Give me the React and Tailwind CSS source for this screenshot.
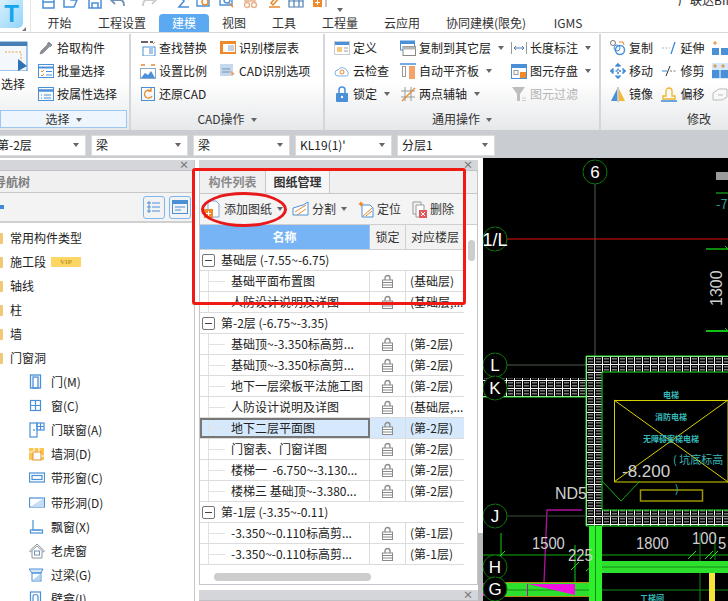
import React from "react";

const tabs = [
  ["开始", "w-[51px]"],
  ["工程设置", "w-[74px]"],
  ["建模", "w-[50px]"],
  ["视图", "w-[50px]"],
  ["工具", "w-[50px]"],
  ["工程量", "w-[62px]"],
  ["云应用", "w-[62px]"],
  ["协同建模(限免)", "w-[106px]"],
  ["IGMS", "w-[58px]"],
];

const Svg = ({ children, w = 16, h = 16, className = "" }) => (
  <svg width={w} height={h} viewBox={`0 0 ${w} ${h}`} fill="none" className={`shrink-0 ${className}`}>
    {children}
  </svg>
);

const Caret = ({ className = "" }) => (
  <span className={`inline-block w-0 h-0 border-x-[3.5px] border-t-[4px] border-x-transparent border-t-[#666] ${className}`}></span>
);

// quick access bar, cut off by the top of the window
const quick = [
  ["w-[22px]", <path d="M2 1v14h11V1M2 9h11" stroke="#4a90d9" strokeWidth="1.5" />],
  ["w-[24px]", <path d="M1 14V5h5l2 2h6l-3 7zM1 14" stroke="#4a90d9" strokeWidth="1.5" />],
  ["w-[23px]", <path d="M2 1h12v14H2zM5 1v5h6V1M5 15v-5h6v5" stroke="#4a90d9" strokeWidth="1.5" />],
  ["w-[31px]", <path d="M5 3L1 7l4 4M1 7h9c3 0 4 2 4 6" stroke="#6f93b8" strokeWidth="1.8" />],
  ["w-[35px]", <path d="M11 3l4 4-4 4M15 7H6c-3 0-4 2-4 6" stroke="#ccc" strokeWidth="1.8" />],
  ["w-[20px]", <path d="M13 2H3l5 6-5 6h10" stroke="#4a90d9" strokeWidth="1.6" />],
  ["w-[23px]", <g stroke="#4a90d9" strokeWidth="1.4"><path d="M1 1h12v12H1z" /><circle cx="9" cy="9" r="3" stroke="#e58a2e" /></g>],
  ["w-[24px]", <g stroke="#4a90d9" strokeWidth="1.4"><path d="M1 2h12v10H1z" /><circle cx="8" cy="7" r="3" /><path d="M10 10l4 4" stroke="#e58a2e" /></g>],
  ["w-[24px]", <g stroke="#e9b08c" strokeWidth="1.4"><path d="M2 2h10v6H2z" /><circle cx="4" cy="12" r="2.5" /><circle cx="11" cy="12" r="2.5" /></g>],
  ["w-[21px]", <path d="M2 14h11M4 10l7-8 2 2-7 8z" stroke="#e58a2e" strokeWidth="1.5" />],
  ["w-[24px]", <path d="M1 3h14v11H1zM1 8h14M6 3v11M11 3v11" stroke="#4a7fb5" strokeWidth="1.2" />],
  ["w-[25px]", <g><path d="M3 2h11v12" stroke="#888" /><rect x="1" y="5" width="9" height="9" fill="#ef8a2c" /><path d="M3 9.500h5M5.500 7v5" stroke="#fff" /></g>],
];

const icons = {
  dropper: <path d="M2 14l1-3 6-6 2 2-6 6zM9 4l2-2 3 3-2 2z" fill="#8b8f96" stroke="#6d7178" strokeWidth=".6" />,
  batch: <g stroke="#4a90d9"><rect x=".5" y="1.500" width="15" height="13" /><path d="M.5 4.500h15" strokeWidth="2" /><path d="M3 8l1 1 2-2M3 12l1 1 2-2" stroke="#e58a2e" /><path d="M8 8.500h6M8 12h6" /></g>,
  attr: <g stroke="#4a90d9"><rect x=".5" y="1.500" width="15" height="13" /><path d="M.5 4.500h15" strokeWidth="2.500" /><path d="M3 9h1M3 12h1M6 9h7M6 12h7" /></g>,
  find: <g><path d="M1 2h7M10 2h3" stroke="#666" strokeWidth="2" /><path d="M13 4l2-2" stroke="#e58a2e" /><rect x="3" y="7" width="12" height="9" stroke="#4a90d9" /><path d="M9 9h4M9 11h4M9 13h4" stroke="#4a90d9" /></g>,
  scale: <g><path d="M1 2h4M11 2h4" stroke="#e58a2e" strokeWidth="1.500" /><rect x=".5" y="5.500" width="15" height="10" stroke="#8aa8c8" /><path d="M1 15l4-5 3 2 3-4 4 7z" fill="#4a90d9" /></g>,
  restore: <g><rect x="1.500" y="1.500" width="13" height="13" stroke="#4a90d9" /><path d="M11 5a4 4 0 1 0 1 5M11 2v3H8" stroke="#e58a2e" strokeWidth="1.300" /></g>,
  floors: <g><rect x="0" y="1" width="16" height="13" fill="#ef8a2c" /><rect x="3" y="4" width="12" height="8" fill="#fff" /><path d="M8 6h6M8 8h6M8 10h6" stroke="#8aa8c8" /></g>,
  cadopt: <g><rect x="0" y="1" width="13" height="12" fill="#c6d8ec" /><path d="M10 7l5 4-3 1 1 3z" fill="#f0a060" /><path d="M2 6h8M2 9h8" stroke="#6f93b8" /></g>,
  define: <g><rect x=".5" y="1.500" width="15" height="13" stroke="#c8ccd2" fill="#fff" /><rect x="1" y="2" width="14" height="3" fill="#4a90d9" /><rect x="3" y="7" width="5" height="5" fill="#f5c780" /><path d="M10 8h4M10 11h4" stroke="#999" /></g>,
  cloud: <g><path d="M4 13a3 3 0 0 1 0-6 5 5 0 0 1 9 1 3 3 0 0 1 0 5z" stroke="#7eb4e8" /><circle cx="8" cy="9" r="2" stroke="#e58a2e" /></g>,
  lock: <g><rect x="2" y="7" width="12" height="9" rx="1" fill="#4a90d9" /><path d="M5 7V4a3 3 0 0 1 6 0v3" stroke="#4a90d9" strokeWidth="1.500" /><circle cx="8" cy="11" r="1.200" fill="#fff" /></g>,
  copyTo: <g><rect x=".5" y="1" width="14" height="9" fill="#fff" stroke="#4a90d9" /><rect x="1" y="1" width="13" height="3" fill="#4a90d9" /><rect x="3" y="6.500" width="12.500" height="9" fill="#fff" stroke="#888" /><rect x="3" y="6.500" width="12.500" height="3" fill="#b5b5b5" /></g>,
  align: <g><path d="M0 1h16" stroke="#4a90d9" strokeWidth="1.500" /><rect x="2.500" y="3.500" width="3" height="10" stroke="#999" /><rect x="9" y="3" width="6" height="13" fill="#f5a36a" /></g>,
  axis: <g stroke="#999"><path d="M1 5h14M1 11h14M5 1v14M11 1v14" /><path d="M2 15L15 2" stroke="#e58a2e" strokeWidth="1.200" /></g>,
  dim: <g stroke="#4a7fb5"><path d="M.5 2v12M15.500 2v12" stroke="#999" /><path d="M3 8h10M3 8l2-2M3 8l2 2M13 8l-2-2M13 8l-2 2" /></g>,
  save: <g><rect x=".5" y="1.500" width="15" height="14" stroke="#4a90d9" fill="#fff" /><rect x="1" y="2" width="14" height="3" fill="#4a90d9" /><rect x="3" y="7.500" width="4" height="4" stroke="#999" /><rect x="9" y="9" width="6" height="6" fill="#ef8a2c" /></g>,
  filter: <g><path d="M1 1h13L9 8v7H6V8z" fill="#bdbdbd" /><path d="M11 12h4M11 14.500h4" stroke="#ccc" /></g>,
  copy: <g><circle cx="3" cy="3" r="2.500" stroke="#777" /><path d="M9 2h4l1 3" stroke="#e58a2e" /><circle cx="10" cy="10" r="4.500" stroke="#4a90d9" strokeWidth="1.500" /><circle cx="7" cy="8" r="3" stroke="#4a90d9" /></g>,
  move: <g stroke="#3e88d6" strokeWidth="1.600"><path d="M8 2v12M2 8h12" strokeDasharray="2 1.500" /><path d="M5.500 3.500L8 1l2.500 2.500M5.500 12.500L8 15l2.500-2.500M3.500 5.500L1 8l2.500 2.500M12.500 5.500L15 8l-2.500 2.500" /></g>,
  mirror: <g><path d="M1 15L7 3v12z" fill="#4a90d9" /><path d="M9 3v12h6z" fill="#f5b82e" /><path d="M8 1v15" stroke="#999" /></g>,
  extend: <g><path d="M1 8h8" stroke="#9fb7d0" strokeDasharray="2 1.500" /><path d="M10 14l4-12" stroke="#3e88d6" strokeWidth="1.300" /></g>,
  trim: <g><path d="M1 8h5" stroke="#3e88d6" /><path d="M9 8h6" stroke="#777" strokeDasharray="2 1.500" /><path d="M5 13l4-10" stroke="#333" /></g>,
  offset: <g><path d="M2 13V10h3V5a3 3 0 0 1 6 0v5h3v3z" stroke="#f0b429" strokeWidth="1.300" /><path d="M0 15h16" stroke="#3e88d6" strokeWidth="1.500" /></g>,
  merge: <g><path d="M3 1v4M1 3h4" stroke="#e58a2e" /><rect x="0" y="8" width="7" height="7" fill="#4a90d9" /><rect x="9" y="8" width="7" height="7" fill="#4a90d9" /></g>,
  split: <g><path d="M3 1v4M1 3h4M11 1v4M9 3h4" stroke="#e58a2e" /><rect x="0" y="7" width="16" height="8" fill="#4a90d9" /><path d="M8 7v8" stroke="#fff" /></g>,
  stretch: <path d="M1 14V7l6-4h8v8l-5 3zM6 9h5" stroke="#bbb" />,
};

const Tool = ({ icon, text, caret, disabled, iconClass = "" }) => (
  <div className="h-[23px] flex items-center whitespace-nowrap">
    <Svg className={iconClass}>{icons[icon]}</Svg>
    <span className={`ml-[3px] ${disabled ? "text-[#b5b5b5]" : "text-[#222]"}`}>{text}</span>
    {caret && <Caret className="ml-[7px]" />}
  </div>
);

const Column = ({ className = "", items }) => (
  <div className={`flex flex-col ${className}`}>
    {items.map((it) => (
      <Tool key={it.text} {...it} />
    ))}
  </div>
);

const Group = ({ title, className, children, footerClass = "", titleCaret = true }) => (
  <div className={`flex flex-col h-full border-r-2 border-[#d3d6da] ${className}`}>
    <div className="flex h-[76px] pt-[2px]">{children}</div>
    <div className={`h-[18px] flex items-center justify-center text-[#333] ${footerClass}`}>
      <span>{title}</span>
      {titleCaret && <Caret className="ml-[6px] mt-[1px]" />}
    </div>
  </div>
);

const Combo = ({ text, className, noCaret }) => (
  <div className={`h-[21px] bg-white border border-[#dcdcdc] flex items-center justify-between pl-[4px] pr-[6px] ${className}`}>
    <span className="text-[#222] whitespace-nowrap">{text}</span>
    {!noCaret && <Caret />}
  </div>
);

const PanelStrip = ({ className = "" }) => (
  <div className={`h-[11px] bg-[#d4d6da] border-b border-[#bfc1c5] flex items-center justify-end pr-[5px] text-[10px] leading-none text-[#777] font-bold ${className}`}>×</div>
);

const treeTop = [
  ["常用构件类型"],
  ["施工段", true],
  ["轴线"],
  ["柱"],
  ["墙"],
  ["门窗洞"],
];

const Folder = () => <div className="w-[3px] h-[11px] bg-[#f3c875] rounded-r-[1px] mr-[7px]"></div>;

const subIcons = {
  door: <g stroke="#4a90d9" strokeWidth="1.300"><rect x="1.500" y="1" width="10" height="13" /><rect x="4" y="3" width="5" height="11" /></g>,
  win: <g stroke="#4a90d9" strokeWidth="1.200"><rect x="1.500" y="2.500" width="10" height="10" /><path d="M6.500 2.500v10M1.500 7.500h10" /></g>,
  doorwin: <g stroke="#4a90d9" strokeWidth="1.200"><rect x="1" y="1" width="7" height="14" /><rect x="8" y="1" width="7" height="7" /><path d="M11.500 1v7M8 4.500h7M5 7v2" /></g>,
  hole: <g><rect x="0" y="2" width="15" height="12" fill="#f9c74f" /><rect x="4" y="6" width="8" height="8" fill="#fff" stroke="#e58a2e" /><path d="M0 6h4M5 2v4M10 2v4M12 10h3" stroke="#fff" /></g>,
  band: <g stroke="#4a90d9" strokeWidth="1.200"><rect x=".5" y="3" width="15" height="9" /><rect x="3" y="5.500" width="10" height="4" /></g>,
  bandhole: <g><rect x=".5" y="3" width="15" height="9" stroke="#4a90d9" strokeWidth="1.200" /><path d="M1 12L15 3v9z" fill="#c6dcf3" /></g>,
  bay: <g stroke="#4a90d9" strokeWidth="1.200"><path d="M4 1v10h8" /><rect x="1.500" y="11" width="12" height="3" /></g>,
  dormer: <g stroke="#8e9399"><path d="M8 1L0.500 8l1 1L8 3l6.500 6 1-1zM3 8v7h10V8" /><rect x="5.500" y="8" width="5" height="4" stroke="#6f93b8" /></g>,
  lintel: <g><path d="M0 2h14l-2 4H3z" fill="#d8e5f3" stroke="#4a90d9" /><rect x="3" y="6" width="9" height="8" stroke="#4a90d9" /><path d="M4 13l7-6v6z" fill="#b9d3ee" /></g>,
  niche: <g stroke="#4a90d9" strokeWidth="1.200"><rect x="1.500" y="1" width="10" height="14" /><path d="M4 15V6a2.500 2.500 0 0 1 5 0v9" /></g>,
};

const treeSub = [
  ["door", "门(M)"],
  ["win", "窗(C)"],
  ["doorwin", "门联窗(A)"],
  ["hole", "墙洞(D)"],
  ["band", "带形窗(C)"],
  ["bandhole", "带形洞(D)"],
  ["bay", "飘窗(X)"],
  ["dormer", "老虎窗"],
  ["lintel", "过梁(G)"],
  ["niche", "壁龛(I)"],
];

const LeftPanel = () => (
  <div className="w-[195px] shrink-0 h-full flex flex-col bg-white border-r border-[#c4c6ca]">
    <PanelStrip />
    <div className="h-[22px] bg-[#f0f0f0] border-b border-[#c8c8c8] flex items-center text-[#7d7d7d] font-bold -ml-[30px]">
      模块导航树
    </div>
    <div className="h-[30px] bg-[#f3f3f3] border-b-2 border-[#d0d0d0] flex items-center justify-between pr-[3px]">
      <div className="w-[4px] h-[4px] bg-[#3e88d6]"></div>
      <div className="flex gap-[4px]">
        <div className="w-[22px] h-[23px] border border-[#7fb6ef] rounded-[3px] flex items-center justify-center">
          <Svg w={14} h={14}><path d="M1 2h2v2H1zM1 6h2v2H1zM1 10h2v2H1zM5 3h8M5 7h8M5 11h8" stroke="#4a90d9" /></Svg>
        </div>
        <div className="w-[22px] h-[23px] border border-[#7fb6ef] rounded-[3px] flex items-center justify-center">
          <Svg w={16} h={14}><rect x=".5" y=".5" width="15" height="13" stroke="#4a90d9" /><rect x="1" y="1" width="14" height="3" fill="#4a90d9" /><path d="M3 7h10M3 10h6" stroke="#4a90d9" /></Svg>
        </div>
      </div>
    </div>
    <div className="flex-1 overflow-hidden pt-[3px]">
      {treeTop.map(([t, vip]) => (
        <div key={t} className="h-[24px] flex items-center">
          <Folder />
          <span className="text-[#222]">{t}</span>
          {vip && (
            <span className="ml-[5px] w-[30px] h-[10px] bg-[#fdd663] text-[#c09a2a] text-[7px] leading-[10px] font-bold text-center font-['Liberation_Serif',serif]">VIP</span>
          )}
        </div>
      ))}
      {treeSub.map(([ic, t]) => (
        <div key={t} className="h-[24.1px] flex items-center pl-[29px]">
          <Svg>{subIcons[ic]}</Svg>
          <span className="ml-[6px] text-[#222]">{t}</span>
        </div>
      ))}
    </div>
  </div>
);

const Lock = () => (
  <Svg w={11} h={14}>
    <path d="M3 6V4a2.500 2.500 0 0 1 5 0v2" stroke="#8a8a8a" strokeWidth="1.300" />
    <rect x=".5" y="6" width="10" height="7.500" fill="#fff" stroke="#8a8a8a" />
    <path d="M1 8.500h9M1 11h9" stroke="#8a8a8a" />
  </Svg>
);

const rows = [
  { group: "基础层 (-7.55~-6.75)" },
  { name: "基础平面布置图", floor: "(基础层)" },
  { name: "人防设计说明及详图", floor: "(基础层,..." },
  { group: "第-2层 (-6.75~-3.35)" },
  { name: "基础顶~-3.350标高剪...", floor: "(第-2层)" },
  { name: "基础顶~-3.350标高剪...", floor: "(第-2层)" },
  { name: "地下一层梁板平法施工图", floor: "(第-2层)" },
  { name: "人防设计说明及详图", floor: "(基础层,..." },
  { name: "地下二层平面图", floor: "(第-2层)", selected: true },
  { name: "门窗表、门窗详图", floor: "(第-2层)" },
  { name: "楼梯一  -6.750~-3.130...", floor: "(第-2层)" },
  { name: "楼梯三 基础顶~-3.380...", floor: "(第-2层)" },
  { group: "第-1层 (-3.35~-0.11)" },
  { name: "-3.350~-0.110标高剪...", floor: "(第-1层)" },
  { name: "-3.350~-0.110标高剪...", floor: "(第-1层)" },
];

const Row = ({ row }) => {
  if (row.group) {
    return (
      <div className="h-[21px] flex items-center border-b border-[#dcdcdc] pl-[2px]">
        <div className="w-[13px] h-[13px] border border-[#777] rounded-[2px] flex items-center justify-center">
          <div className="w-[7px] h-px bg-[#444]"></div>
        </div>
        <span className="ml-[6px] text-[#222] whitespace-nowrap">{row.group}</span>
      </div>
    );
  }
  const sel = row.selected;
  return (
    <div className={`h-[21px] flex border-b border-[#dcdcdc] ${sel ? "bg-[#d5e8fc]" : ""}`}>
      <div className={`w-[170px] flex items-center border-r border-[#dcdcdc] ${sel ? "outline-2 -outline-offset-2 outline-[#777]" : ""}`}>
        <div className="ml-[8px] w-[17px] self-stretch border-l border-[#e2e2e2] flex items-center">
          <div className="h-px w-full bg-[#e2e2e2]"></div>
        </div>
        <span className="ml-[6px] text-[#222] whitespace-pre">{row.name}</span>
      </div>
      <div className="w-[36px] flex items-center justify-center border-r border-[#dcdcdc]">
        <Lock />
      </div>
      <div className="flex-1 flex items-center pl-[4px] text-[#222] whitespace-nowrap">{row.floor}</div>
    </div>
  );
};

const DrawingPanel = () => (
  <div className="w-[279px] shrink-0 ml-[4px] h-full flex flex-col">
    <PanelStrip />
    <div className="h-[420px] bg-white border-x border-b border-[#c4c6ca] flex flex-col overflow-hidden relative">
      <div className="h-[23px] bg-[#f0f0f0] border-b border-[#c8c8c8] flex">
        <div className="w-[65px] flex items-center justify-center text-[#8a8a8a] font-bold">构件列表</div>
        <div className="w-[65px] flex items-center justify-center bg-[#f7f7f7] border-x border-[#c8c8c8] text-[#333] font-bold">图纸管理</div>
      </div>
      <div className="h-[31px] bg-[#f4f4f4] border-b border-[#cfcfcf] flex items-center pl-[4px]">
        <Svg w={17} h={18}><path d="M4 1h8l3 3v13H4z" stroke="#7aa7d6" fill="#fff" /><rect x="0" y="9" width="9" height="9" fill="#ef8a2c" /><path d="M2 13.500h5M4.500 11v5" stroke="#fff" /></Svg>
        <span className="ml-[3px] text-[#333]">添加图纸</span>
        <Caret className="ml-[5px]" />
        <Svg w={17} h={16} className="ml-[9px]"><path d="M1 14V7l10-3 5-3v13z" fill="#fff" stroke="#4a90d9" /><path d="M3 11l11-7M5 14l9-6" stroke="#e58a2e" /></Svg>
        <span className="ml-[3px] text-[#333]">分割</span>
        <Caret className="ml-[5px]" />
        <Svg w={16} h={18} className="ml-[11px]"><path d="M4 5h8l3 3v9H4z" stroke="#4a90d9" fill="#fff" /><path d="M5 16l9-8M8 16l6-5" stroke="#e58a2e" /><path d="M3 1l1 2 2 1-2 1-1 2-1-2-2-1 2-1z" fill="#ef8a2c" /></Svg>
        <span className="ml-[3px] text-[#333]">定位</span>
        <Svg w={15} h={17} className="ml-[11px]"><path d="M1 1h8v12H1z" stroke="#999" /><path d="M4 4h8v12H4z" fill="#fff" stroke="#999" /><rect x="7" y="9" width="8" height="8" fill="#e2575b" /><path d="M9 11l4 4M13 11l-4 4" stroke="#fff" /></Svg>
        <span className="ml-[3px] text-[#333]">删除</span>
      </div>
      <div className="w-[264px] flex-1 overflow-hidden">
        <div className="h-[25px] flex border-b border-[#d0d0d0] bg-[#f2f2f2]">
          <div className="w-[170px] bg-[#77b4f5] border-r border-[#9cc7f2] flex items-center justify-center text-white font-bold">名称</div>
          <div className="w-[36px] border-r border-[#d0d0d0] flex items-center justify-center text-[#333]">锁定</div>
          <div className="flex-1 flex items-center justify-center text-[#333] whitespace-nowrap">对应楼层</div>
        </div>
        {rows.map((r, i) => (
          <Row key={i} row={r} />
        ))}
      </div>
      <div className="h-[13px] pl-[14px] pt-[2px] shrink-0">
        <div className="w-[157px] h-[8px] rounded-full bg-[#cdcdcd]"></div>
      </div>
      {/* vertical scroll thumb */}
      <div className="absolute left-[268px] top-[69px] w-[7px] h-[21px] rounded-full bg-[#cdcdcd]"></div>
    </div>
    <div className="mt-[5px] h-[11px] bg-[#d4d6da] border-b border-[#bfc1c5] flex items-center justify-end pr-[5px] text-[10px] leading-none text-[#777] font-bold">×</div>
    <div className="flex-1 flex border-x border-[#c4c6ca] bg-white">
      <div className="w-[65px] bg-[#f0f0f0] border-r border-[#c8c8c8]"></div>
      <div className="w-[65px] bg-[#f7f7f7] border-r border-[#c8c8c8]"></div>
    </div>
  </div>
);

const Bubble = ({ x, y, label, size = 17 }) => (
  <g>
    <circle cx={x} cy={y} r="12" stroke="#0b7a0b" strokeWidth="1" strokeDasharray="9 0.500" />
    <text x={x} y={y + size * 0.37} textAnchor="middle" fill="#fff" fontSize={size} fontFamily="Liberation Sans, sans-serif">{label}</text>
  </g>
);

const Dim = ({ x, y, t, size = 17 }) => (
  <text x={x} y={y} fill="#d0d0d0" fontSize={size} fontFamily="Liberation Sans, sans-serif" textLength={t.length * 8.200} lengthAdjust="spacingAndGlyphs">{t}</text>
);

// CAD drawing on the right, in window coordinates
const CadCanvas = () => (
  <svg width="245" height="443" viewBox="483 158 245 443" className="block bg-black">
    <defs>
      <pattern id="hatch" x="586" y="356" width="8" height="8" patternUnits="userSpaceOnUse">
        <rect width="8" height="8" fill="#050505" />
        <rect x="2" y="2" width="5" height="1.500" fill="#777" />
        <rect x="2" y="5" width="5" height="1.500" fill="#777" />
        <path d="M0 .5h8M.5 0v8" stroke="#f4f4f4" strokeWidth="1" />
      </pattern>
    </defs>

    <path d="M595 184V356" stroke="#4d5c4d" />
    <path d="M507 239H728" stroke="#e01010" />
    <path d="M507 365H586" stroke="#4d5c4d" />
    <Bubble x={595} y={172} label="6" />
    <Bubble x={495} y={239} label="1/L" size={18} />
    <Bubble x={495} y={365} label="L" />

    <rect x="716" y="172" width="12" height="8" fill="#ddd" opacity=".7" />
    <path d="M716 193H728" stroke="#1fd01f" />
    <text x="716" y="209" fill="#2f9a9a" fontSize="13">-7</text>
    <path d="M706 249H728" stroke="#0b8a0b" strokeWidth="2" />
    <path d="M706 331H728" stroke="#10c010" strokeWidth="2" />
    <path d="M725 246l3 3M725 328l3 3" stroke="#10c010" />
    <text transform="translate(722 306) rotate(-90)" fill="#d0d0d0" fontSize="16" fontFamily="Liberation Sans, sans-serif">1300</text>

    {/* walls */}
    <path d="M586 356H728V372H602V510H728V526H586V397H483V378H586Z" fill="url(#hatch)" />
    <path d="M728 356H586V526H728M602 372H728M602 372V510H728" stroke="#1fe01f" strokeWidth="1" fill="none" />
    <path d="M483 397H586" stroke="#1fe01f" />
    <Bubble x={495} y={388} label="K" />
    <Bubble x={495} y={516} label="J" />

    {/* lift */}
    <path d="M614.500 400.500H728V482H614.500Z M614 400L728 482 M614 482L728 400" stroke="#d8d000" strokeWidth="1" fill="none" />
    <path d="M602 481L621 501L640 481" stroke="#0faa0f" fill="none" />
    <rect x="640.500" y="490" width="62" height="11" stroke="#9c9600" strokeWidth="1.500" />
    <g fill="#35b8b8" fontFamily="Noto Sans CJK SC, sans-serif" fontWeight="700">
      <text x="671" y="398" fontSize="8" textAnchor="middle">电梯</text>
      <text x="671" y="420" fontSize="8" textAnchor="middle">消防电梯</text>
      <text x="671" y="442" fontSize="8" textAnchor="middle">无障碍客梯电梯</text>
      <text x="673" y="464" fontSize="11" fontWeight="400">( 坑底标高</text>
      <text x="675" y="493" fontSize="11" fontWeight="400">)</text>
    </g>
    <text x="622" y="477" fill="#d0d0d0" fontSize="17" fontFamily="Liberation Sans, sans-serif">-8.200</text>
    <text x="555" y="499" fill="#d0d0d0" fontSize="16" fontFamily="Liberation Sans, sans-serif">ND5</text>

    <path d="M582 510H547L544 583" stroke="#b010a0" strokeWidth="1.300" fill="none" />

    {/* grid lines */}
    <path d="M507 516H586M602 516H728" stroke="#3d4f3d" />
    <path d="M483 555H728" stroke="#0fae0f" />
    <path d="M501 533V560" stroke="#0b8a0b" strokeWidth="1.500" />
    <path d="M575 545V590" stroke="#0b8a0b" strokeWidth="1.500" />
    <path d="M700 533V601M715 533V560" stroke="#0b8a0b" strokeWidth="1" />

    {/* beams */}
    <rect x="602" y="561" width="126" height="12" fill="#2ee02e" />
    <path d="M602 567H728" stroke="#148a14" />
    <rect x="500" y="583" width="89" height="13" fill="#2ee02e" />
    <path d="M500 582.500H589M500 596.500H589" stroke="#b98a1a" />
    <path d="M500 590H728" stroke="#148a14" />
    <rect x="589" y="526" width="13" height="75" fill="#2cf02c" />
    <path d="M595.500 526V601" stroke="#148a14" />
    <rect x="709" y="573" width="6" height="28" fill="#f5e23a" />
    <path d="M483 583H500V596H483Z" fill="#f010e0" />
    <path d="M528 584H575V595Z" fill="#f010e0" />
    <path d="M527.500 584V596" stroke="#b010a0" />

    {/* ticks */}
    <path d="M497 559l8-8M571 570l8-8M586 571l6-5M705 559l8-8M710 559l8-8M688 559l8-8" stroke="#1fe01f" />

    <Bubble x={495} y={567} label="H" />
    <Bubble x={495} y={589} label="G" />
    <Dim x={532} y={549} t="1500" />
    <Dim x={568} y={561} t="225" />
    <Dim x={636} y={549} t="1800" />
    <Dim x={692} y={544} t="100" size={16} />
    <Dim x={718} y={549} t="5" />
    <text x="640" y="601" fill="#35b8b8" fontSize="8" fontWeight="700">工梯间</text>
  </svg>
);

export default function App() {
  return (
    <div className="relative w-[728px] h-[601px] overflow-hidden bg-white text-[12px] leading-none font-['Noto_Sans_CJK_SC','Liberation_Sans',sans-serif] flex flex-col">
      {/* title + tabs */}
      <div className="h-[33px] flex shrink-0 border-b border-[#d5d7da]">
        <div className="w-[31px] relative border-r border-[#e4e4e4]">
          <div className="w-[23px] h-[28px] rounded-br-[5px] bg-gradient-to-br from-[#d9f0fd] to-[#8fd4f8] flex items-center justify-center text-[#15a4ee] text-[24px] font-bold font-['Liberation_Sans',sans-serif]">T</div>
          <div className="absolute right-[4px] bottom-[1px] w-0 h-0 border-l-[4px] border-t-[4px] border-l-transparent border-t-[#777] rotate-90"></div>
        </div>
        <div className="flex-1 flex flex-col">
          <div className="h-[14px] overflow-hidden flex justify-between">
            <div className="flex pl-[10px] -mt-[7px]">
              {quick.map(([w, g], i) => (
                <div key={i} className={w}>
                  <Svg>{g}</Svg>
                </div>
              ))}
              <div className="mt-[8px]"><Caret /></div>
            </div>
            <div className="-mt-[7px] pt-[1px] text-[12px] text-[#222] whitespace-nowrap w-[50px] overflow-hidden">广联达BIM土建</div>
          </div>
          <div className="h-[19px] flex pl-[3px]">
            {tabs.map(([t, w]) => (
              <div key={t} className={`${w} flex items-center justify-center whitespace-nowrap rounded-t-[4px] ${t === "建模" ? "bg-[#5ba9f0] text-white" : "text-[#333]"}`}>
                {t}
              </div>
            ))}
          </div>
        </div>
      </div>

      {/* ribbon */}
      <div className="h-[97px] shrink-0 flex bg-gradient-to-b from-white via-white to-[#e6e8ea] pt-[1px]">
        <Group title="选择" className="w-[131px]" footerClass="border border-[#9cc7f2] bg-[#eef5fc] mr-[2px]">
          <div className="w-[38px] flex flex-col">
            <Svg w={28} h={30} className="mt-[5px]">
              <rect x="-1" y="1" width="28" height="29" fill="#f4f8fc" stroke="#4a90d9" />
              <rect x="0" y="1" width="27" height="4" fill="#4a7fb5" />
              <path d="M5 11h16v14" stroke="#e9a23b" strokeDasharray="2 1.500" />
              <path d="M18 18l9 7-9 5z" fill="#2e74b5" />
            </Svg>
            <span className="mt-[7px] ml-[1px] text-[#222]">选择</span>
          </div>
          <Column items={[{ icon: "dropper", text: "拾取构件" }, { icon: "batch", text: "批量选择" }, { icon: "attr", text: "按属性选择" }]} />
        </Group>
        <Group title="CAD操作" className="w-[194px]">
          <Column className="ml-[9px] w-[80px]" items={[{ icon: "find", text: "查找替换" }, { icon: "scale", text: "设置比例" }, { icon: "restore", text: "还原CAD" }]} />
          <Column items={[{ icon: "floors", text: "识别楼层表" }, { icon: "cadopt", text: "CAD识别选项" }]} />
        </Group>
        <Group title="通用操作" className="w-[276px]">
          <Column className="ml-[9px] w-[66px]" items={[{ icon: "define", text: "定义" }, { icon: "cloud", text: "云检查" }, { icon: "lock", text: "锁定", caret: true }]} />
          <Column className="w-[111px]" items={[{ icon: "copyTo", text: "复制到其它层", caret: true }, { icon: "align", text: "自动平齐板", caret: true }, { icon: "axis", text: "两点辅轴", caret: true }]} />
          <Column items={[{ icon: "dim", text: "长度标注", caret: true }, { icon: "save", text: "图元存盘", caret: true }, { icon: "filter", text: "图元过滤", disabled: true }]} />
        </Group>
        <div className="flex-1 flex flex-col overflow-hidden">
          <div className="flex h-[76px] pt-[2px] pl-[9px]">
            <Column className="w-[54px]" items={[{ icon: "copy", text: "复制" }, { icon: "move", text: "移动" }, { icon: "mirror", text: "镜像" }]} />
            <Column className="w-[53px]" items={[{ icon: "extend", text: "延伸" }, { icon: "trim", text: "修剪" }, { icon: "offset", text: "偏移" }]} />
            <div className="flex flex-col">
              <div className="h-[23px] flex items-center"><Svg>{icons.merge}</Svg></div>
              <div className="h-[23px] flex items-center"><Svg className="bg-[#d5e8fc]">{icons.split}</Svg></div>
              <div className="h-[23px] flex items-center"><Svg>{icons.stretch}</Svg></div>
            </div>
          </div>
          <div className="h-[18px] flex items-center pl-[86px] text-[#333]">修改</div>
        </div>
      </div>

      {/* property combos */}
      <div className="h-[28px] shrink-0 bg-[#c9ccd0] flex items-center gap-[5px] pt-[2px]">
        <Combo text="第-2层" className="-ml-[12px] !pl-[8px] w-[98px]" />
        <Combo text="梁" className="w-[97px]" />
        <Combo text="梁" className="w-[97px]" />
        <Combo text="KL19(1)'" className="w-[97px]" />
        <Combo text="分层1" className="w-[98px]" />
      </div>

      {/* workspace */}
      <div className="flex-1 flex min-h-0 bg-white pt-[2px]">
        <LeftPanel />
        <DrawingPanel />
        <div className="w-[5px] shrink-0 flex flex-col justify-end">
          <div className="h-[68px] bg-[#b8babd]"></div>
        </div>
        <div className="flex-1 min-w-0 -mt-[2px]">
          <CadCanvas />
        </div>
      </div>

      {/* red markup drawn over the screenshot */}
      <div className="absolute left-[192px] top-[168px] w-[274px] h-[137px] border-[3px] border-[#f01a14] rounded-[3px] pointer-events-none"></div>
      <div className="absolute left-[201px] top-[192px] w-[86px] h-[35px] border-[3px] border-[#e8191a] rounded-[50%] pointer-events-none"></div>
    </div>
  );
}
